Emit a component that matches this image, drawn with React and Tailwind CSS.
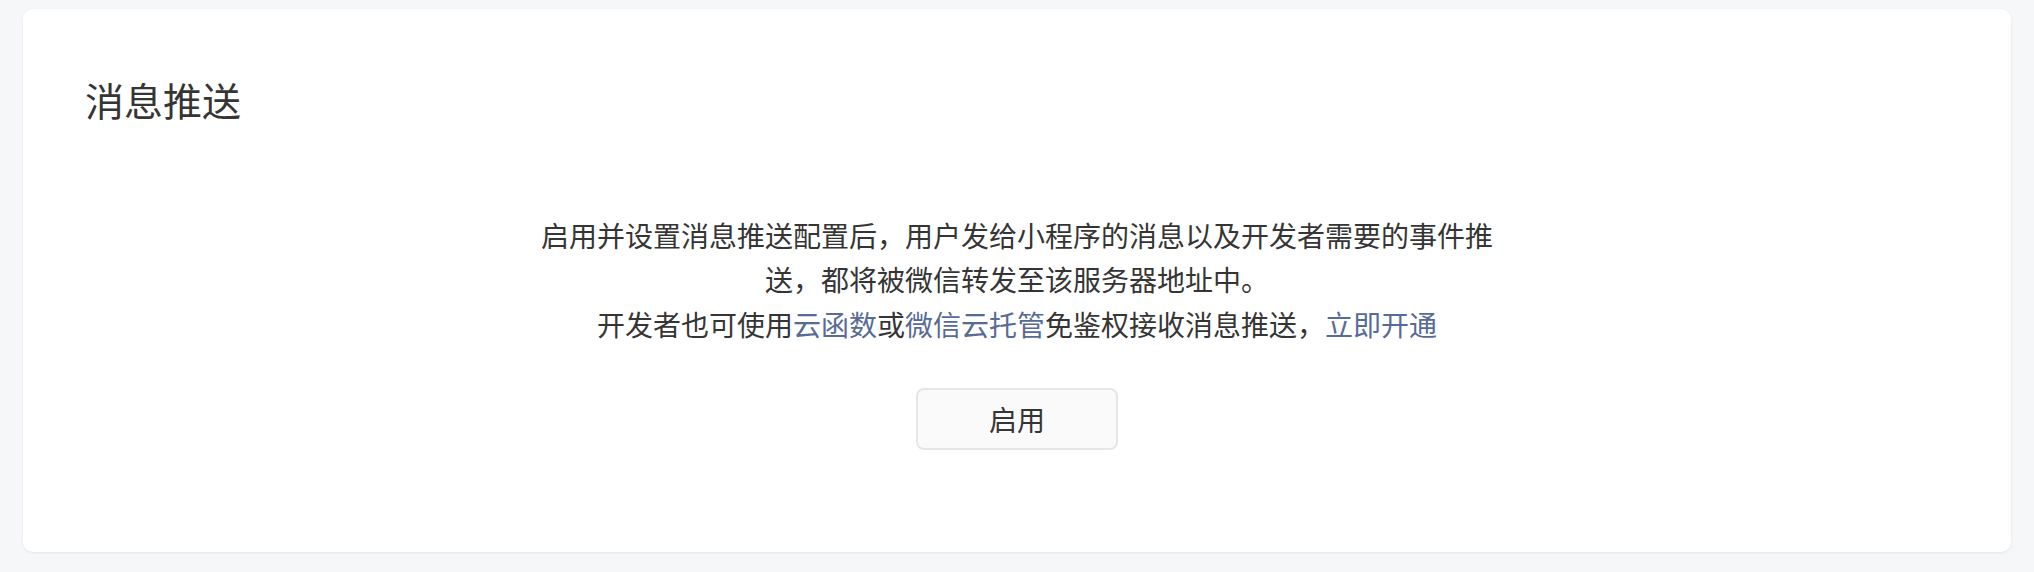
import React from 'react';

const font = { fontFamily: '"Noto Sans CJK SC", "Noto Sans", sans-serif' };

export default function App() {
  return (
    <div
      className="min-h-[572px] bg-[#f6f7f9] pt-[9px] px-[23px] pb-[20px]"
      style={font}
    >
      <div className="h-[543px] rounded-[10px] bg-white shadow-[0_1px_3px_rgba(0,0,0,0.08)] pt-[71px] px-[62px]">
        <h2 className="text-[39px] leading-none text-[#353535] font-normal">
          消息推送
        </h2>

        <div className="mx-auto mt-[94px] max-w-[964px] text-center text-[28px] leading-[44px] text-[#353535]">
          <p>
            启用并设置消息推送配置后，用户发给小程序的消息以及开发者需要的事件推送，都将被微信转发至该服务器地址中。
          </p>
          <p className="mt-[1px]">
            开发者也可使用<a className="text-[#576b95]">云函数</a>或<a className="text-[#576b95]">微信云托管</a>免鉴权接收消息推送，<a className="text-[#576b95]">立即开通</a>
          </p>
        </div>

        <div className="mt-[42px] flex justify-center">
          <button className="h-[62px] w-[202px] rounded-[8px] border-2 border-[#e4e6e9] bg-[#fafafa] text-[28px] text-[#353535]">
            启用
          </button>
        </div>
      </div>
    </div>
  );
}
